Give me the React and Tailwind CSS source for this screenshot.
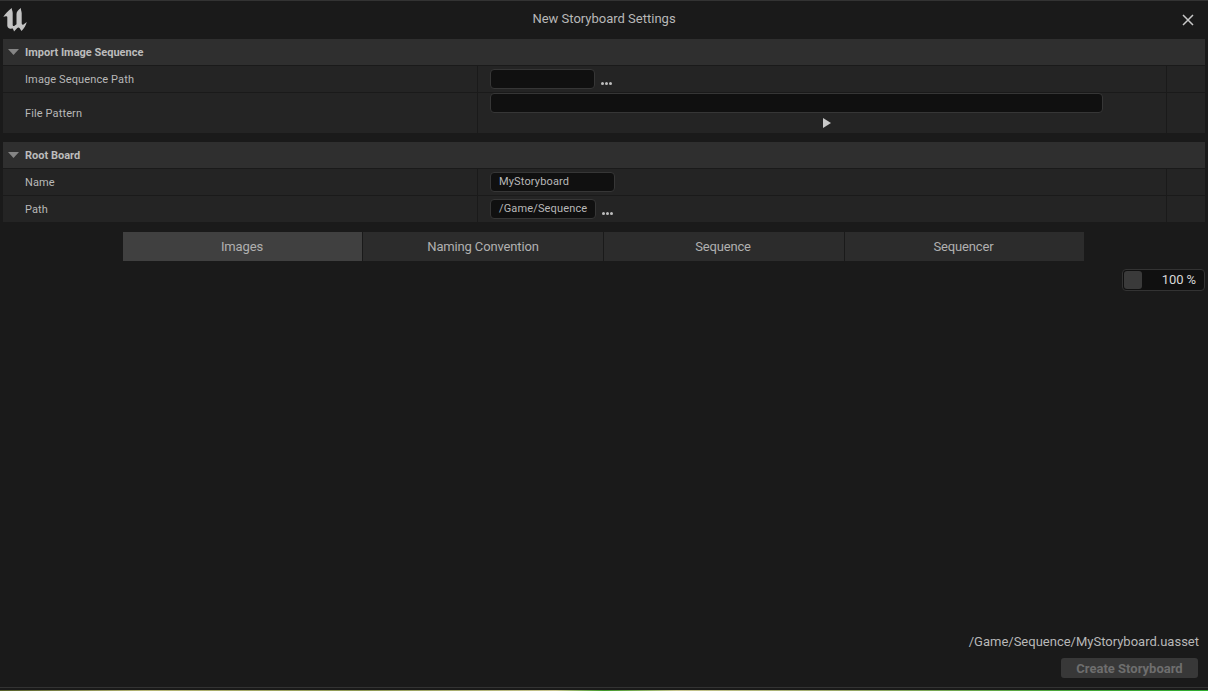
function Caret() {
  return (
    <svg width="11" height="6" viewBox="0 0 11 6" className="ml-[5px] mr-[6px] shrink-0">
      <path d="M0 0H11L5.5 6Z" fill="#858585" />
    </svg>
  );
}

function Dots() {
  return (
    <span className="flex gap-[1px] self-end mb-[7px]">
      <i className="size-[3px] rounded-full bg-[#bdbdbd]" />
      <i className="size-[3px] rounded-full bg-[#bdbdbd]" />
      <i className="size-[3px] rounded-full bg-[#bdbdbd]" />
    </span>
  );
}

function Logo() {
  return (
    <svg width="24" height="24" viewBox="0 0 24 24" className="ml-[3px] mt-[-1px]">
      <path
        d="M0.3 9 C2 6 5 3 8.7 0 C8.7 2 9.7 3 9.7 5 L9.7 16.5 C9.7 18 10.5 18.5 11.5 17.8 L13.5 16.3 L13.5 6 C13.5 3.5 15.5 1.5 18 0 C17.5 2 18.7 3 18.7 5 L18.7 15 C18.7 16.5 19.5 17 20.5 16.5 L23.7 14 C23.2 17 21 20.5 18.5 23 L16.5 20 C16 19.3 15 19.3 14.3 20 L11 23.5 C10.8 22 10 20.8 9.2 20.3 C7 21.5 5 20.5 4.3 18 L4.3 9 C4.3 8 2 8 0.3 9 Z"
        fill="#c4c4c4"
      />
    </svg>
  );
}

function SectionHeader({ children }) {
  return (
    <div className="flex h-[26px] items-center bg-[#2f2f2f] border-b border-[#1a1a1a] box-content">
      <Caret />
      <span className="pt-[2px] text-[11px] font-bold text-[#bcbcbc]">{children}</span>
    </div>
  );
}

function Row({ label, height, last, children }) {
  return (
    <div className={`flex bg-[#242424] ${last ? "" : "border-b border-[#1a1a1a]"}`} style={{ height }}>
      <div className="flex w-[474px] items-center pl-[22px] pt-[2px] text-[11px] tracking-[0.12px] text-[#b8b8b8]">{label}</div>
      <div className="flex-1 border-x border-[#1a1a1a] pl-[12px]">{children}</div>
      <div className="w-[38px]" />
    </div>
  );
}

function Field({ width, children }) {
  return (
    <div
      className="flex h-[20px] items-center rounded-[4px] border border-[#363636] bg-[#101010] pl-[8px] text-[11px] tracking-[0.15px] text-[#b8b8b8]"
      style={{ width }}
    >
      {children}
    </div>
  );
}

function Tab({ active, width, className, children }) {
  return (
    <div
      className={`flex h-[29px] items-center justify-center text-[13px] tracking-[-0.15px] text-[#b0b0b0] ${active ? "bg-[#404040]" : "bg-[#2c2c2c]"} ${className}`}
      style={{ width }}
    >
      {children}
    </div>
  );
}

export default function App() {
  return (
    <div className="flex h-[691px] w-[1208px] flex-col overflow-hidden bg-[#1a1a1a] [font-family:Roboto,'Liberation_Sans',sans-serif]">
      <div className="h-[1px] bg-[#333333]" />
      <div className="relative flex h-[38px] items-center justify-between pr-[13px]">
        <Logo />
        <span className="absolute inset-x-0 top-[8px] text-center text-[13px] text-[#b8b8b8]">New Storyboard Settings</span>
        <svg width="14" height="14" viewBox="0 0 14 14">
          <path d="M2 2L12 12M12 2L2 12" stroke="#c8c8c8" strokeWidth="1.5" />
        </svg>
      </div>

      <div className="mx-[3px] flex flex-col">
        <SectionHeader>Import Image Sequence</SectionHeader>
        <Row label="Image Sequence Path" height={27}>
          <div className="flex h-full items-center gap-[6px]">
            <Field width={105} />
            <Dots />
          </div>
        </Row>
        <Row label="File Pattern" height={40} last>
          <div className="flex flex-col">
            <Field width={613} />
            <svg width="8" height="10" viewBox="0 0 8 10" className="ml-[333px] mt-[5px]">
              <path d="M0 0L8 5L0 10Z" fill="#c8c8c8" />
            </svg>
          </div>
        </Row>

        <div className="mt-[9px]">
          <SectionHeader>Root Board</SectionHeader>
        </div>
        <Row label="Name" height={27}>
          <div className="flex h-full items-center">
            <Field width={125}>MyStoryboard</Field>
          </div>
        </Row>
        <Row label="Path" height={26} last>
          <div className="flex h-full items-center gap-[6px]">
            <Field width={106}>/Game/Sequence</Field>
            <Dots />
          </div>
        </Row>
      </div>

      <div className="mt-[10px] flex gap-[1px] pl-[123px]">
        <Tab active width={239} className="pr-[1px]">Images</Tab>
        <Tab width={240} className="">Naming Convention</Tab>
        <Tab width={240} className="pr-[2px]">Sequence</Tab>
        <Tab width={239} className="pr-[2px]">Sequencer</Tab>
      </div>

      <div className="mt-[8px] flex justify-end pr-[3px]">
        <div className="flex h-[22px] w-[83px] items-center justify-between rounded-[4px] border border-[#333333] bg-[#101010] pl-[1px] pr-[8px]">
          <div className="h-[18px] w-[18px] rounded-[3px] bg-[#3a3a3a]" />
          <span className="text-[13px] tracking-[-0.1px] text-[#d8d8d8]">100 %</span>
        </div>
      </div>

      <div className="flex flex-1 flex-col items-end justify-end pb-[9px]">
        <span className="mr-[9px] text-[13px] text-[#b8b8b8]">/Game/Sequence/MyStoryboard.uasset</span>
        <div className="mr-[10px] mt-[7px] flex h-[20px] w-[137px] items-center justify-center rounded-[3px] bg-[#383838] pt-[1px] text-[13px] font-bold text-[#6e6e6e]">
          Create Storyboard
        </div>
      </div>

      <div className="h-[1px] bg-[#333333]" />
      <div className="h-[2px]" />
      <div className="h-[1px] bg-[linear-gradient(90deg,#55602a_0%,#b8b878_12%,#8f9a55_30%,#c9c690_46%,#3f9a2a_50%,#c8c690_56%,#9aa868_70%,#4aa83a_88%,#2fae2f_100%)]" />
    </div>
  );
}
